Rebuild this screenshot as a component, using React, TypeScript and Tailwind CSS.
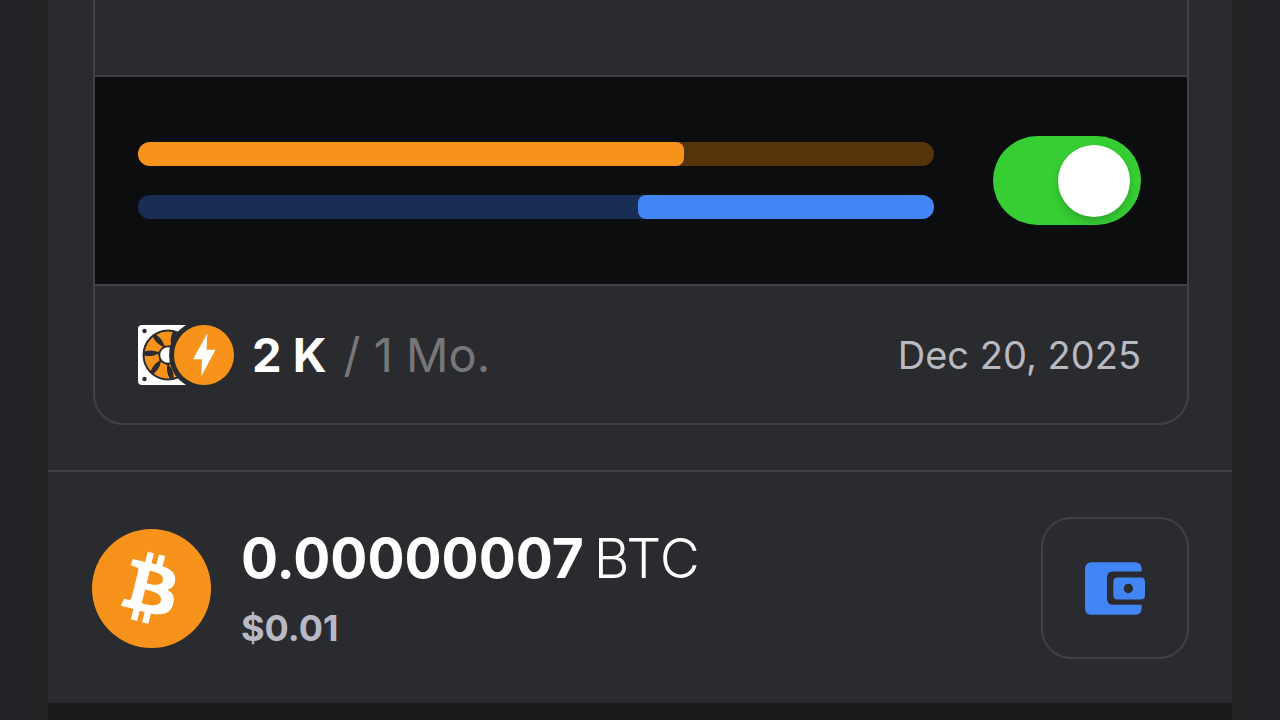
const FONT = "font-['Inter','Liberation_Sans',sans-serif]";

const METERS = [
  {
    label: "Hashrate",
    value: 68.6,
    track: "justify-start bg-[#55340b]",
    fill: "rounded-r-lg bg-[#f7931a]",
  },
  {
    label: "Time left",
    value: 37.2,
    track: "justify-end bg-[#182e55]",
    fill: "rounded-l-lg bg-[#4285f4]",
  },
];

// seven blades, evenly spaced
const BLADES = [0, 51.4, 102.9, 154.3, 205.7, 257.1, 308.6];

function FanIcon() {
  return (
    <svg viewBox="0 0 60 60" className="size-15 shrink-0" aria-hidden="true">
      <rect width="60" height="60" rx="4" fill="#fff" />
      <circle cx="6.5" cy="6" r="2.2" fill="#2a2b2e" />
      <circle cx="6.5" cy="54" r="2.2" fill="#2a2b2e" />
      <g transform="translate(30 30)">
        <circle r="25.5" fill="#2a2b2e" />
        {BLADES.map((angle) => (
          <path
            key={angle}
            d="M-23.2 -3.5A23.5 23.5 0 0 1 -15 -18C-13 -14 -10 -10.5 -5.2 -8.6L-9.8 -3C-14 -4.800 -18.500 -5 -23.200 -3.500Z"
            fill="#f7931a"
            transform={`rotate(${angle})`}
          />
        ))}
        <circle r="7.800" fill="#fff" />
      </g>
    </svg>
  );
}

function BoltIcon() {
  return (
    <svg
      viewBox="0 0 72 72"
      className="-my-1.5 -mr-1.5 -ml-[30px] size-[72px] shrink-0"
      aria-hidden="true"
    >
      <circle cx="36" cy="36" r="35" fill="#2a2b2e" />
      <circle cx="36" cy="36" r="30" fill="#f7931a" />
      <path d="M39.3 14.500L25 40.300H34L33.300 57.300L47.500 30.800H38.600Z" fill="#fff" />
    </svg>
  );
}

function BitcoinIcon() {
  return (
    <svg viewBox="0 0 32 32" className="size-[119px] shrink-0" aria-hidden="true">
      <circle cx="16" cy="16" r="16" fill="#f7931a" />
      <path
        transform="translate(-0.14 0.3) scale(0.97)"
        d="M23.189 14.02c.314-2.096-1.283-3.223-3.465-3.975l.708-2.84-1.728-.43-.69 2.765c-.454-.114-.92-.22-1.385-.326l.695-2.783L15.596 6l-.708 2.839c-.376-.086-.746-.17-1.104-.26l.002-.009-2.384-.595-.46 1.846s1.283.294 1.256.312c.7.175.826.638.805 1.006l-.806 3.235c.048.012.11.03.18.057l-.183-.045-1.13 4.532c-.086.212-.303.531-.793.41.018.025-1.256-.313-1.256-.313l-.858 1.978 2.25.561c.418.105.828.215 1.231.318l-.715 2.872 1.727.43.708-2.84c.472.127.93.245 1.378.357l-.706 2.828 1.728.43.715-2.866c2.948.558 5.164.333 6.097-2.333.752-2.146-.037-3.385-1.588-4.192 1.13-.26 1.98-1.003 2.207-2.538zm-3.95 5.538c-.533 2.147-4.148.986-5.32.695l.95-3.805c1.172.293 4.929.872 4.37 3.11zm.535-5.569c-.487 1.953-3.495.96-4.47.717l.86-3.45c.975.243 4.118.696 3.61 2.733z"
        fill="#fff"
      />
    </svg>
  );
}

function WalletIcon() {
  return (
    <svg viewBox="0 0 180 158" className="h-[53px] w-15" fill="#4285f4" aria-hidden="true">
      <path d="M18 0H152Q170 2 170 20V28H84Q66 28 66 46V110Q66 128 84 128H170V138Q170 156 152 158H18Q0 156 0 138V20Q0 2 18 0Z" />
      <path
        fillRule="evenodd"
        d="M98 46H167Q180 46 180 59V99Q180 112 167 112H98Q85 112 85 99V59Q85 46 98 46ZM130 65a14 14 0 1 0 0 28a14 14 0 1 0 0-28Z"
      />
    </svg>
  );
}

function MinerCard() {
  return (
    <article className="overflow-hidden rounded-b-[30px] border-x-2 border-b-2 border-[#404144]">
      <div className="h-[75px]" />

      <div className="flex items-center gap-[59px] border-y-2 border-[#404144] bg-[#0b0d0e] py-[59px] pr-[46px] pl-[43px]">
        <div className="flex flex-1 flex-col gap-[29px]">
          {METERS.map((m) => (
            <div
              key={m.label}
              role="meter"
              aria-label={m.label}
              aria-valuenow={m.value}
              aria-valuemin={0}
              aria-valuemax={100}
              className={`flex h-6 overflow-hidden rounded-full ${m.track}`}
            >
              <div className={m.fill} style={{ width: `${m.value}%` }} />
            </div>
          ))}
        </div>
        <input
          type="checkbox"
          role="switch"
          aria-label="Miner enabled"
          defaultChecked
          className="flex h-[89px] w-[148px] shrink-0 cursor-pointer appearance-none items-center rounded-full bg-[#55565a] px-[11px] before:size-[72px] before:rounded-full before:bg-white before:shadow-[0_4px_8px_rgba(0,0,0,0.2)] checked:justify-end checked:bg-[#37ce34]"
        />
      </div>

      <div className="flex items-center justify-between pt-[39px] pr-[46px] pb-[38px] pl-[43px]">
        <div className="flex items-center">
          <FanIcon />
          <BoltIcon />
          <p className="ml-[18px] text-[47px] leading-[58px] text-[#77777a]">
            <span className="mr-[17px] font-bold text-white">2 K</span>/ 1 Mo.
          </p>
        </div>
        <time dateTime="2025-12-20" className="text-[38px] leading-[58px] text-[#b9b9c1]">
          Dec 20, 2025
        </time>
      </div>
    </article>
  );
}

function Balance() {
  return (
    <section className="flex items-center border-t-2 border-[#404144] pt-[45px] pr-[43px] pb-11 pl-11">
      <BitcoinIcon />
      <div className="ml-[30px] flex-1">
        <p className="text-[55px] leading-[80px] text-white">
          <span className="mr-[10px] font-bold">0.00000007</span>
          <span className="font-light">BTC</span>
        </p>
        <p className="text-[36px] leading-[60px] font-bold text-[#b9b9c5]">$0.01</p>
      </div>
      <button
        type="button"
        aria-label="Open wallet"
        className="flex h-[142px] w-[148px] items-center justify-center rounded-[30px] border-2 border-[#404144]"
      >
        <WalletIcon />
      </button>
    </section>
  );
}

export default function App() {
  return (
    <div className={`min-h-screen bg-[#222326] px-8 ${FONT}`}>
      <main className="min-h-screen bg-[#232323] px-4">
        <div className="flex min-h-screen flex-col bg-[#1b1b1b]">
          <div className="bg-[#2a2b2e]">
            <div className="pr-[43px] pb-[45px] pl-[45px]">
              <MinerCard />
            </div>
            <Balance />
          </div>
        </div>
      </main>
    </div>
  );
}
